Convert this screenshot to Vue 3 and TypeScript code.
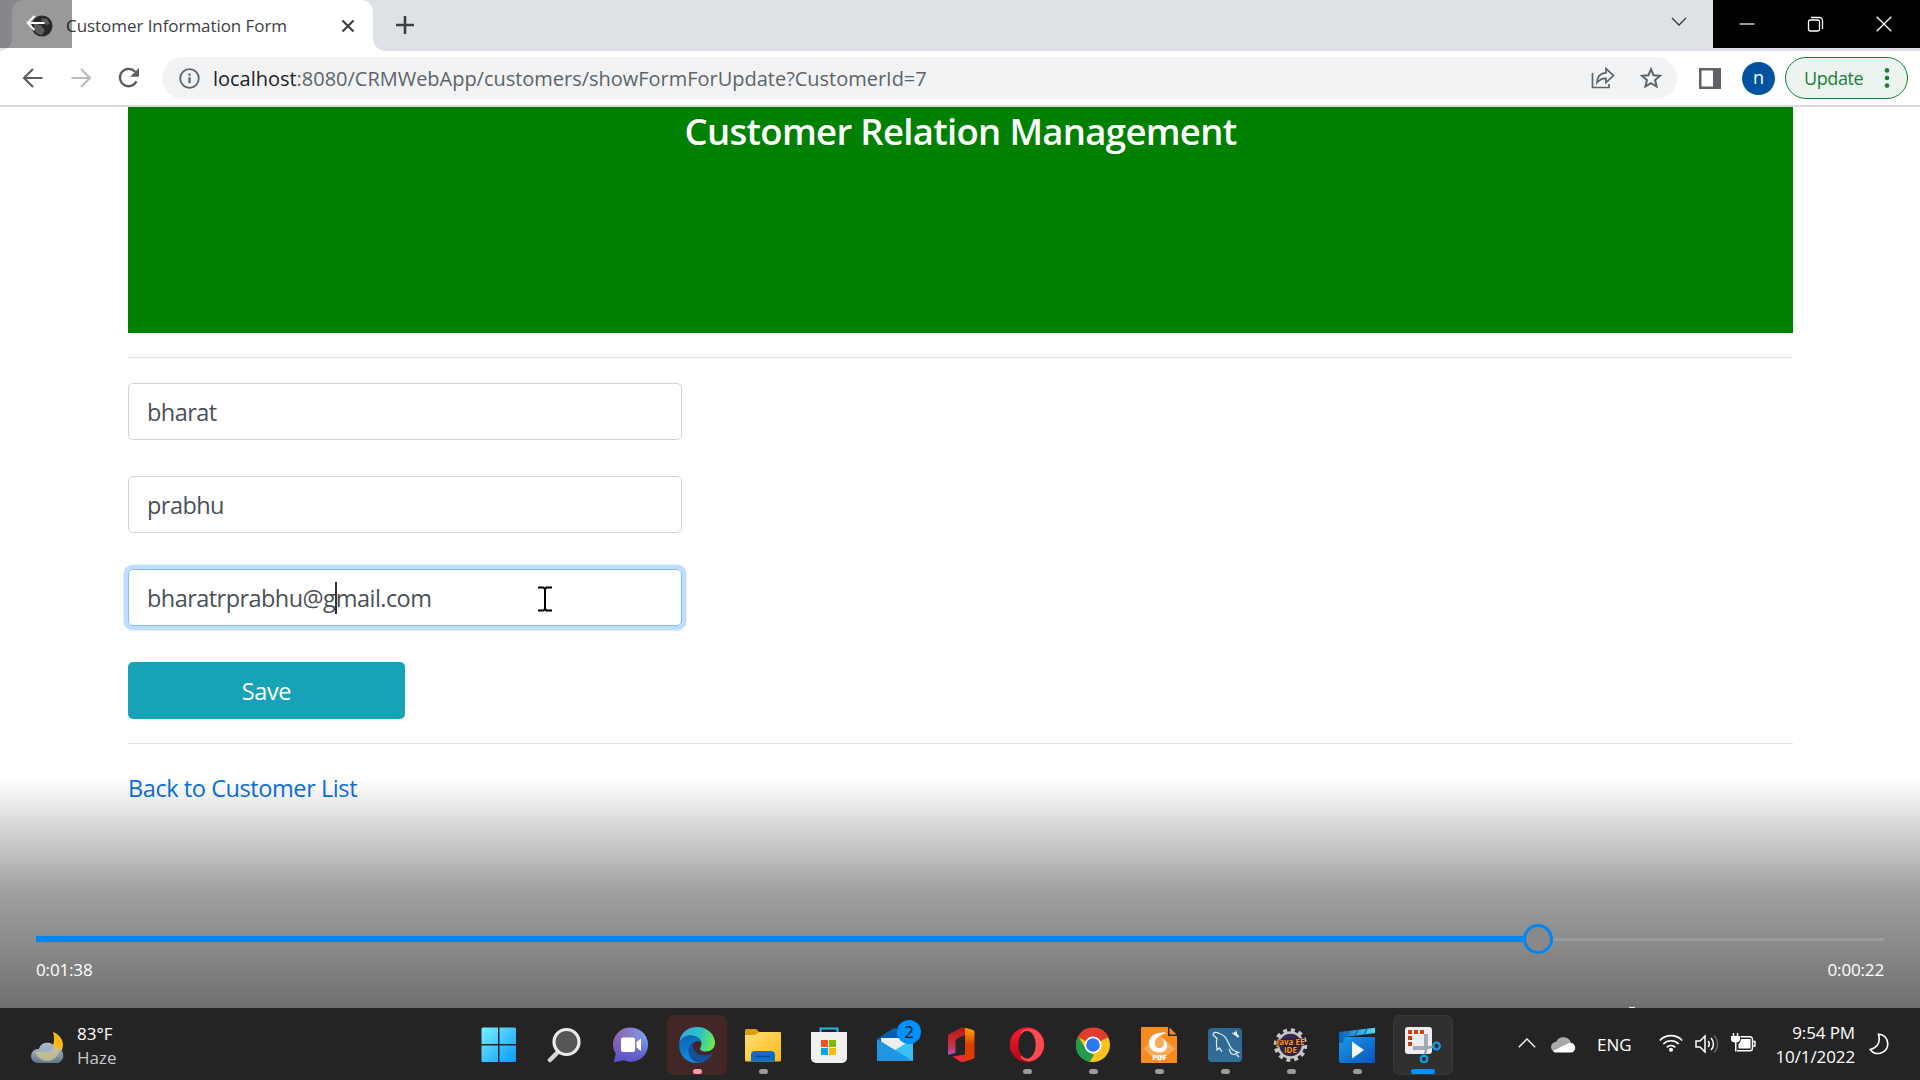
<script setup lang="ts">
import { ref } from 'vue'

const first = ref('bharat')
const last = ref('prabhu')
const progress = 81.3
</script>

<template>
  <div class="screen">
    <header class="tabs">
      <div class="tab">
        <svg class="globe" width="22" height="22" viewBox="0 0 22 22"><circle cx="11" cy="11" r="10.5" fill="#414347"/><path d="M3 8c3 0 4 2 6 2s2 3 4 4-1 4-2 6C6 20 2 16 3 8zM11 3l5 1 3 5-4 1-2-3-3-1z" fill="#999"/></svg>
        <span class="tab-title">Customer Information Form</span>
        <svg class="tab-close" width="14" height="14" viewBox="0 0 14 14"><path d="M1.5 1.5l11 11m0-11l-11 11" stroke="#3c4043" stroke-width="2.2"/></svg>
        <i class="curve left"></i><i class="curve"></i>
      </div>
      <svg class="plus" width="18" height="18" viewBox="0 0 18 18"><path d="M9 0v18M0 9h18" stroke="#3c4043" stroke-width="2.6"/></svg>
      <svg class="chev" width="16" height="10" viewBox="0 0 16 10"><path d="M1 1l7 7 7-7" fill="none" stroke="#33363a" stroke-width="1.3"/></svg>
      <div class="back-box"><svg width="20" height="16" viewBox="0 0 20 16"><path d="M8.500 1L1.500 8l7 7M2 8h16.500" fill="none" stroke="#fff" stroke-width="1.8"/></svg></div>
      <div class="caption">
        <span><svg width="16" height="16" viewBox="0 0 16 16"><path d="M.5 8h15" stroke="#fff" stroke-width="1.2"/></svg></span>
        <span><svg width="17" height="17" viewBox="0 0 17 17" fill="none" stroke="#fff" stroke-width="1.3"><rect x="1.500" y="4" width="11" height="11" rx="1.800"/><path d="M4 1.500h8.500a3 3 0 0 1 3 3V13"/></svg></span>
        <span><svg width="16" height="16" viewBox="0 0 16 16"><path d="M.7.7l14.600 14.600m0-14.600L.7 15.300" stroke="#fff" stroke-width="1.3"/></svg></span>
      </div>
    </header>

    <nav class="toolbar">
      <svg class="nav-i" width="22" height="20" viewBox="0 0 22 20"><path d="M11 1L2 10l9 9M2 10h18.500" fill="none" stroke="#5a5d62" stroke-width="2.200"/></svg>
      <svg class="nav-i" width="22" height="20" viewBox="0 0 22 20"><path d="M11 1l9 9-9 9M20 10H1.500" fill="none" stroke="#babcbe" stroke-width="2.200"/></svg>
      <svg class="nav-i reload" width="22" height="22" viewBox="0 0 22 22"><path d="M18.500 14.300A8.700 8.700 0 1 1 17.200 4.800" fill="none" stroke="#5a5d62" stroke-width="2.300"/><path d="M21 1v8.800h-8.800z" fill="#5a5d62"/></svg>
      <div class="url">
        <svg width="21" height="21" viewBox="0 0 21 21"><circle cx="10.500" cy="10.500" r="9.300" fill="none" stroke="#5f6368" stroke-width="1.800"/><path d="M10.500 9.300v6M10.500 5.500v2.200" stroke="#5f6368" stroke-width="2.200"/></svg>
        <span class="address"><b>localhost</b>:8080/CRMWebApp/customers/showFormForUpdate?CustomerId=7</span>
        <svg class="share" width="24" height="22" viewBox="0 0 24 22" fill="none" stroke="#5f6368" stroke-width="1.700"><path d="M1.500 6v14.500H18V17M6 15.500c.3-6.500 3.500-9.500 9-9.700V1.600l7.500 7-7.500 7v-4.300c-4 0-6.500 1.300-9 4.200z"/></svg>
        <svg class="star" width="22" height="22" viewBox="0 0 22 22"><path d="M11 2.200l2.500 6 6.600.6-5 4.300 1.500 6.400-5.600-3.400-5.600 3.400 1.500-6.400-5-4.300 6.600-.6z" fill="none" stroke="#5f6368" stroke-width="2"/></svg>
      </div>
      <svg class="panel" width="22" height="21" viewBox="0 0 22 21"><path d="M0 0h22v21H0zM2.500 2.500v16H14v-16z" fill="#5f6368" fill-rule="evenodd"/></svg>
      <div class="avatar">n</div>
      <div class="update"><span>Update</span><svg width="6" height="20" viewBox="0 0 6 20" fill="#188038"><circle cx="3" cy="2.400" r="2.300"/><circle cx="3" cy="10" r="2.300"/><circle cx="3" cy="17.600" r="2.300"/></svg></div>
    </nav>

    <main class="page">
      <div class="banner"><h2>Customer Relation Management</h2></div>
      <hr class="rule">
      <form @submit.prevent>
        <div class="field"><span class="value">{{ first }}</span></div>
        <div class="field"><span class="value">{{ last }}</span></div>
        <div class="field focused">
          <span class="value">bharatrprabhu@g<i class="caret"></i>mail.com</span>
          <svg class="ibeam" width="16" height="26" viewBox="0 0 16 26"><path d="M1 1.500h5.500L8 3l1.500-1.500H15M8 2v22M1 24.500h5.500L8 23l1.500 1.500H15" fill="none" stroke="#000" stroke-width="2"/></svg>
        </div>
        <button class="save">Save</button>
      </form>
      <hr class="rule">
      <a class="back">Back to Customer List</a>
    </main>

    <section class="player">
      <div class="track"><div class="fill" :style="{ width: progress + '%' }"><i class="thumb"></i></div></div>
      <div class="times"><span>0:01:38</span><span>0:00:22</span></div>
      <i class="speck"></i>
    </section>

    <footer class="taskbar">
      <div class="weather">
        <svg width="36" height="34" viewBox="0 0 36 34">
          <defs><linearGradient id="cl" x1="0" y1="0" x2="0" y2="1"><stop stop-color="#b9c9dc"/><stop offset="1" stop-color="#60758b"/></linearGradient></defs>
          <path d="M23 1c8 3 12 10 9 18-4 9-16 13-24 5 11 0 19-9 15-23z" fill="#fdb913"/>
          <path d="M8 32a7 7 0 0 1 0-14h1a8.500 8.500 0 0 1 16-1 7.700 7.700 0 0 1 3 15z" fill="url(#cl)"/>
          <path d="M5 21c7 0 13-1 17-5 3 0 5 1 8 2-3 15-20 16-25 3z" fill="#d3c98f" opacity=".75"/>
          <path d="M9 18a8.500 8.500 0 0 1 15-1c-3 5-9 5-15 4z" fill="#9eafc4" opacity=".8"/>
        </svg>
        <div><p>83°F</p><p class="haze">Haze</p></div>
      </div>

      <div class="apps">
        <div class="app"><svg width="36" height="36" viewBox="0 0 36 36"><defs><linearGradient id="win" gradientUnits="userSpaceOnUse" x1="0" y1="0" x2="36" y2="36"><stop stop-color="#79f2ff"/><stop offset="1" stop-color="#0795ff"/></linearGradient></defs><path d="M2 .5h15v16.500H.5V2A1.500 1.500 0 0 1 2 .5zM18.500.5h15A1.500 1.500 0 0 1 35 2v15H18.500zM.5 18.500H17V35H2a1.500 1.500 0 0 1-1.500-1.500zM18.500 18.500H35v15a1.500 1.500 0 0 1-1.500 1.500h-15z" fill="url(#win)"/></svg></div>
        <div class="app"><svg width="36" height="36" viewBox="0 0 36 36"><path d="M11 25L3 33" stroke="#d4d7da" stroke-width="4.500" stroke-linecap="round"/><circle cx="19.500" cy="15" r="12.500" fill="#555657" stroke="#e9eaec" stroke-width="3.200"/></svg></div>
        <div class="app"><svg width="36" height="36" viewBox="0 0 36 36"><defs><linearGradient id="chat" x1="0" y1=".3" x2="1" y2=".2"><stop stop-color="#8f5fa9"/><stop offset="1" stop-color="#7ba0ee"/></linearGradient><linearGradient id="chat2" x1="0" y1="0" x2="0" y2="1"><stop offset=".3" stop-color="#5558ce" stop-opacity="0"/><stop offset="1" stop-color="#5353cb"/></linearGradient></defs><path d="M18 .5a17 17 0 1 1-7 32.500L1 35l2-8A17 17 0 0 1 18 .5z" fill="url(#chat)"/><path d="M18 .5a17 17 0 1 1-7 32.500L1 35l2-8A17 17 0 0 1 18 .5z" fill="url(#chat2)"/><rect x="8" y="10.500" width="14" height="14.500" rx="2" fill="#fff"/><path d="M23.500 15l4.500-3.500V24l-4.500-3.500z" fill="#fff"/></svg></div>
        <div class="app hot"><svg width="36" height="36" viewBox="0 0 36 36"><defs><linearGradient id="e1" x1="0" y1=".3" x2="1" y2=".5"><stop stop-color="#35a9e8"/><stop offset=".55" stop-color="#2cc2c4"/><stop offset="1" stop-color="#6bec4b"/></linearGradient><linearGradient id="e2" x1="0" y1="0" x2=".3" y2="1"><stop stop-color="#0a62ad"/><stop offset="1" stop-color="#108de8"/></linearGradient></defs><path d="M.3 16C1 6 8.500 0 18 0c11 0 18 8 18 15.500 0 6-4.500 9-9.500 9-4 0-5.500-1.600-5.500-3 0-1.300 1.500-2 1.500-5 0-4-4.500-8-10.500-8S2 12 .3 16z" fill="url(#e1)"/><path d="M.1 17C2 11 6 8.500 11 8.500c6 0 10.500 3 11.300 7-4-3.500-10-.5-10 6C12.300 29 18 34 25 34.500c-2 1-4.500 1.500-7 1.500C7 36-.5 27.500.1 17z" fill="url(#e2)"/><path d="M14 15c-3 2-4.500 5-4.500 8.500 0 6.500 5 12 11 12.300 6-.5 10-4 12.500-8 .4-1-.5-1.300-1.300-.8C24 30.500 12 27 14 15z" fill="#144f98"/></svg><i></i></div>
        <div class="app"><svg width="36" height="36" viewBox="0 0 36 36"><defs><linearGradient id="fo" x1="0" y1="0" x2="1" y2="1"><stop stop-color="#ffe07a"/><stop offset="1" stop-color="#fbb914"/></linearGradient></defs><path d="M0 3.500A1.500 1.500 0 0 1 1.500 2H11l4 3.500V10H0z" fill="#e09c0b"/><path d="M0 8h10l4.500-3H35a1 1 0 0 1 1 1v27a1.500 1.500 0 0 1-1.500 1.500h-33A1.500 1.500 0 0 1 0 33z" fill="url(#fo)"/><path d="M6 34.500V28a4 4 0 0 1 4-4h16a4 4 0 0 1 4 4v6.500z" fill="#0b6fc9"/><path d="M11 29.500h14" stroke="#064b92" stroke-width="1.500"/></svg><i></i></div>
        <div class="app"><svg width="36" height="36" viewBox="0 0 36 36"><path d="M9.500 6V1.500h17V6" fill="none" stroke="#28b5ea" stroke-width="2"/><path d="M0 5h36v26a5 5 0 0 1-5 5H5a5 5 0 0 1-5-5z" fill="#f1f1f1"/><path d="M10 13h7v7h-7z" fill="#f25022"/><path d="M18 13h7v7h-7z" fill="#7fba00"/><path d="M10 21h7v7h-7z" fill="#00a4ef"/><path d="M18 21h7v7h-7z" fill="#ffb900"/></svg></div>
        <div class="app"><svg width="36" height="36" viewBox="0 0 36 36"><path d="M0 12L15 2q3-2 6 0l15 10-18 16z" fill="#075cac"/><path d="M4 11h28v5L18 26 4 16z" fill="#eee"/><path d="M36 12v22H0z" fill="#38c0f4"/><path d="M0 12l36 22H0z" fill="#2096e2"/></svg><b class="badge">2</b></div>
        <div class="app"><svg width="36" height="36" viewBox="0 0 36 36"><defs><linearGradient id="of" x1="0" y1="0" x2="0" y2="1"><stop stop-color="#bc1717"/><stop offset=".6" stop-color="#c5303d"/><stop offset="1" stop-color="#aa55c0"/></linearGradient><linearGradient id="of2" x1="0" y1="0" x2="0" y2="1"><stop stop-color="#ffa600"/><stop offset=".5" stop-color="#dd3d00"/></linearGradient></defs><path d="M5 9q0-1.500 1.500-2.300L18.500.8H22V8l-7 3q-2.500 1-2.500 3.500V26L5 28z" fill="url(#of)"/><path d="M22 .8l8 2.200q1.500.5 1.500 2v25q0 1.500-1.500 2L22 34.500z" fill="url(#of2)"/><path d="M9.500 29.500L22 27.500v7L19.500 35q-2 0-3.500-1z" fill="#eb263f"/></svg></div>
        <div class="app"><svg width="36" height="36" viewBox="0 0 36 36"><defs><linearGradient id="op" x1="0" y1="0" x2="0" y2="1"><stop stop-color="#ff1b2d"/><stop offset="1" stop-color="#b00717"/></linearGradient></defs><ellipse cx="18" cy="17.700" rx="17.300" ry="17.300" fill="url(#op)"/><path d="M12 5c4-4 8-4 11-3 8 2 12 9 12 16s-5 14-12 16c-4 1-8 0-11-3z" fill="#fb4a50"/><ellipse cx="18" cy="17.700" rx="8.800" ry="13.700" fill="#242424"/></svg><i></i></div>
        <div class="app"><svg width="36" height="36" viewBox="0 0 36 36"><circle cx="18" cy="18" r="17" fill="#fcc31e"/><path d="M18 18L3 10A17 17 0 0 1 33.500 10z" fill="#e33b2e"/><path d="M3.300 9.500L12 24l7 4-4.500 7A17 17 0 0 1 3.300 9.500z" fill="#229b4d"/><circle cx="18" cy="18" r="8.500" fill="#fff"/><circle cx="18" cy="18" r="6.800" fill="#2d78ec"/></svg><i></i></div>
        <div class="app"><svg width="36" height="36" viewBox="0 0 36 36"><path d="M0 0h27v9h9v27H0z" fill="#f68b1f"/><path d="M28.500.5l7 7h-7z" fill="#f68b1f"/><path d="M18 7L34 22 18 35 2 22z" fill="#faaa57"/><path d="M26 6C15 4 8 9 8 16c0 6 5 9.500 10 9.500 6 0 9-4 8-8.500-.5-2.500-2-4-4-5 2 4 1 9-3.500 9-3.500 0-5-2.500-4.500-6C14.500 11 19 7.500 26 6z" fill="#fff"/><text x="18.500" y="33" text-anchor="middle" font-size="7.500" font-weight="900" fill="#fff">PDF</text></svg><i></i></div>
        <div class="app"><svg width="36" height="36" viewBox="0 0 36 36"><defs><linearGradient id="my" x1="0" y1="0" x2="0" y2="1"><stop stop-color="#2e6693"/><stop offset="1" stop-color="#316f97"/></linearGradient></defs><rect x="1" y="1" width="34" height="34" rx="4" fill="url(#my)"/><path d="M6 8c0-3 3-3.500 6-1.500 5 1 7 4 9.500 9.500 1.500 4 3 6.500 6 8l4 1.500-3 1 3.500 3.500M6 8l4 3.500c-1.500 4 0 8 0 11.500l2.500-2L15 25M22 22l2 4.500 4 1.500" fill="none" stroke="#e4eff7" stroke-width="1.200"/><path d="M27 5.500l4.500 4.500" stroke="#fff" stroke-width="2.200"/><path d="M25 5l2 2 2-2-1-2a3 3 0 0 1 1.500 4.500A3 3 0 0 1 25 5z" fill="#fff"/></svg><i></i></div>
        <div class="app"><svg width="36" height="36" viewBox="0 0 36 36"><circle cx="17.500" cy="18" r="15" fill="#211a37" stroke="#c6c6c6" stroke-width="3.500" stroke-dasharray="4 3.850"/><circle cx="17.500" cy="18" r="12.500" fill="#30264f" stroke="#c6c6c6" stroke-width="2.500"/><text x="17.500" y="17.500" text-anchor="middle" font-size="8" font-weight="700" fill="#ff982e" stroke="#241000" stroke-width="1.200" paint-order="stroke">Java EE</text><text x="17.500" y="25.500" text-anchor="middle" font-size="8" font-weight="700" fill="#ff982e" stroke="#241000" stroke-width="1.200" paint-order="stroke">IDE</text></svg><i></i></div>
        <div class="app"><svg width="36" height="36" viewBox="0 0 36 36"><defs><linearGradient id="mv" x1="0" y1="0" x2="1" y2="1"><stop stop-color="#1e9ae6"/><stop offset="1" stop-color="#0753be"/></linearGradient><linearGradient id="mt" x1="0" y1="0" x2="1" y2="0"><stop stop-color="#0a63bd"/><stop offset="1" stop-color="#4fe0fc"/></linearGradient></defs><path d="M0 10h36v24a2 2 0 0 1-2 2H2a2 2 0 0 1-2-2z" fill="url(#mv)"/><path d="M0 5L36 .8V6L6 10l-2 6H0z" fill="url(#mt)"/><path d="M10 4L6 10M19 3l-3 5.500M28 2l-3 5.500" stroke="#0765b9" stroke-width="1.300"/><path d="M13 14.500l12 8.500-12 8.500z" fill="#f7f7f7"/></svg><i></i></div>
        <div class="app active"><svg width="36" height="36" viewBox="0 0 36 36"><rect width="27" height="27" rx="3" fill="#eceef2"/><path d="M3 5h16M5 9v10" fill="none" stroke="#d83b0b" stroke-width="4" stroke-dasharray="4 2"/><path d="M21 7v14M8 21h13" fill="none" stroke="#a6abb1" stroke-width="4"/><path d="M20 27l1.500-6 7-1.500" fill="none" stroke="#9aa3ad" stroke-width="2.500"/><circle cx="31.500" cy="19" r="3.300" fill="none" stroke="#1c97e5" stroke-width="2.300"/><circle cx="19" cy="32" r="3.300" fill="none" stroke="#1c97e5" stroke-width="2.300"/></svg><i></i></div>
      </div>

      <div class="tray">
        <svg class="up" width="18" height="10" viewBox="0 0 18 10"><path d="M.8 9.200L9 1l8.200 8.200" fill="none" stroke="#fff" stroke-width="1.300"/></svg>
        <svg class="cloud" width="25" height="17" viewBox="0 0 25 17"><path d="M5 16A5 5 0 0 1 5 6a8 8 0 0 1 15 1 4.600 4.600 0 0 1 0 9z" fill="#aaa"/><path d="M2 15L18 7a5 5 0 0 1 5 8q-1 1.500-3 1.500H5q-2 0-3-1.500z" fill="#fff"/></svg>
        <span class="lang">ENG</span>
        <svg class="wifi" width="24" height="18" viewBox="0 0 24 18" fill="none" stroke="#fff" stroke-width="1.700"><path d="M.8 6.500a15.500 15.500 0 0 1 22.400 0M4.300 10a10.800 10.800 0 0 1 15.400 0M7.700 13.300a6 6 0 0 1 8.600 0"/><circle cx="12" cy="15.700" r="1.200" fill="#fff"/></svg>
        <svg class="vol" width="24" height="20" viewBox="0 0 24 20" fill="none" stroke="#fff" stroke-width="1.500"><path d="M1 7h4l5-5v16l-5-5H1z"/><path d="M13 7a4.500 4.500 0 0 1 0 6M16 4a8.500 8.500 0 0 1 0 12"/><path d="M19 1.500a12 12 0 0 1 0 17" stroke="#666"/></svg>
        <svg class="bat" width="25" height="20" viewBox="0 0 25 20"><path d="M2.500 0v4M6.500 0v4" stroke="#fff" stroke-width="1.500"/><path d="M0 3h9v4Q8 9.500 4.500 9.500T0 7zM4 9h1.500v9.500H4z" fill="#fff"/><path d="M9.500 3.800H19a2.500 2.500 0 0 1 2.500 2.500v9A2.500 2.500 0 0 1 19 17.800H6M22 8.500h2v4.500h-2" fill="none" stroke="#fff" stroke-width="1.400"/><path d="M10 6h9.500v9.500h-12V11Q10 9 10 6z" fill="#fff"/></svg>
        <div class="clock"><p>9:54 PM</p><p>10/1/2022</p></div>
        <svg class="moon" width="20" height="22" viewBox="0 0 20 22"><path d="M9.500 1.200C15 1 18.800 5.500 18.800 11c0 9-12.500 13-17.500 5.500C7.500 15 12 10 9.500 1.200z" fill="none" stroke="#fff" stroke-width="1.600"/></svg>
      </div>
    </footer>
  </div>
</template>

<style>
body { margin: 0; overflow: hidden; }
</style>

<style scoped>
* { box-sizing: border-box; }
p { margin: 0; }
svg { display: block; flex: none; }
.screen { width: 1920px; height: 1080px; display: flex; flex-direction: column; background: #fff; position: relative; font-family: "Open Sans", "Noto Sans", sans-serif; overflow: hidden; }
.tabs { height: 51px; background: #dee1e6; display: flex; align-items: flex-start; position: relative; flex: none; }
.tab { width: 361px; height: 51px; margin-left: 12px; background: #fff; border-radius: 12px 12px 0 0; display: flex; align-items: center; position: relative; }
.globe { margin-left: 19px; }
.tab-title { margin-left: 13px; width: 222px; white-space: nowrap; font-size: 17px; color: #3c4043; letter-spacing: -0.06px; }
.tab-close { margin-left: 53px; }
.curve { position: absolute; bottom: 0; right: -12px; width: 12px; height: 12px; background: radial-gradient(circle at 100% 0, transparent 11.5px, #fff 12px); }
.curve.left { right: auto; left: -12px; background: radial-gradient(circle at 0 0, transparent 11.5px, #fff 12px); }
.plus { margin: 16px 0 0 23px; }
.chev { margin: 17px 0 0 auto; position: relative; right: 233px; }
.back-box { position: absolute; left: 0; top: 0; width: 72px; height: 48px; background: rgba(0, 0, 0, .4); padding: 15px 0 0 26px; }
.caption { position: absolute; right: 0; top: 0; width: 207px; height: 48px; background: #000; display: flex; padding-right: 1.500px; }
.caption span { flex: 1; display: flex; align-items: center; justify-content: center; }

.toolbar { height: 56px; flex: none; display: flex; align-items: center; padding: 0 12px 0 22px; border-bottom: 2px solid #d8dadc; }
.nav-i { margin-right: 26px; }
.reload { margin-right: 22px; }
.url { width: 1515px; height: 42px; border-radius: 21px; background: #f1f3f4; display: flex; align-items: center; padding: 0 15px 0 17px; }
.address { margin-left: 13px; font-size: 20px; color: #5f6368; white-space: nowrap; letter-spacing: -0.02px; }
.address b { color: #202124; font-weight: 400; }
.share { margin-left: auto; }
.star { margin-left: 25px; }
.panel { margin-left: 22px; }
.avatar { margin-left: 21px; width: 33px; height: 33px; border-radius: 50%; background: #00549f; color: #fff; font-size: 18px; line-height: 31px; text-align: center; }
.update { margin-left: auto; width: 123px; height: 42px; border: 1.500px solid #188038; border-radius: 21px; background: #ecf4ef; display: flex; align-items: center; justify-content: space-between; padding: 0 17px 0 18px; color: #188038; font-size: 18px; letter-spacing: -0.4px; }

.page { flex: none; height: 901px; padding: 0 127px 0 128px; }
.banner { height: 226px; background: #008000; text-align: center; }
h2 { margin: 0; padding-top: 1px; color: #fff; font-size: 36.500px; line-height: 46px; font-weight: 600; letter-spacing: -0.680px; }
.rule { height: 1px; border: 0; background: #dfe0e1; margin: 24.300px 0; }
form { display: block; }
.field { width: 554px; height: 57px; border: 1px solid #ced4da; border-radius: 5px; margin-bottom: 36.200px; padding-left: 18px; display: flex; align-items: center; position: relative; color: #495057; font-size: 23.500px; }
.field.focused { border-color: #80bdff; box-shadow: 0 0 0 4.500px #bfdeff; }
.value { white-space: nowrap; letter-spacing: -0.550px; position: relative; top: 1px; }
.caret { display: inline-block; width: 1.500px; height: 32px; background: #333; margin: 0 -1px 0 0; vertical-align: -7px; }
.ibeam { position: absolute; left: 408px; top: 16px; }
.save { display: block; width: 277px; height: 57px; border: 0; border-radius: 5px; background: #17a2b8; color: #fff; font: 23.500px "Open Sans", sans-serif; letter-spacing: -0.400px; }
.back { color: #0a70e4; font-size: 23.500px; line-height: 36px; display: inline-block; margin-top: 1px; letter-spacing: -0.420px; }

.player { position: absolute; left: 0; right: 0; top: 778px; height: 230px; padding: 158px 36px 0; background: linear-gradient(rgba(0,0,0,0), rgba(0,0,0,.375) 50%, rgba(0,0,0,.56)); }
.track { height: 6px; background: linear-gradient(transparent 2px, #9b9b9b 2px, #9b9b9b 5px, transparent 5px); }
.fill { height: 6px; background: linear-gradient(90deg, #0086f0 calc(100% - 15px), transparent 0); position: relative; }
.thumb { position: absolute; right: -15px; top: -12px; width: 30px; height: 30px; border: 3px solid #0086f0; border-radius: 50%; background: #898989; }
.times { display: flex; justify-content: space-between; color: #fff; font-size: 17px; line-height: 24px; margin-top: 16px; letter-spacing: -0.150px; }
.speck { position: absolute; left: 1629px; bottom: 0; width: 6px; height: 1px; background: #eee; }

.taskbar { position: absolute; left: 0; right: 0; top: 1008px; height: 72px; background: #242424; display: flex; color: #fff; font-size: 17px; line-height: 24px; }
.weather { width: 474px; padding: 14px 0 0 30px; display: flex; gap: 11px; }
.weather svg { margin-top: 9px; }
.weather .haze { color: #c8c8c8; }
.apps { display: flex; gap: 6px; padding-top: 7px; margin-left: -5px; }
.app { width: 60px; height: 60px; border-radius: 7px; padding: 12px; position: relative; }
.app > i { position: absolute; left: 25.500px; bottom: 1px; width: 9px; height: 5px; border-radius: 3px; background: #9b9b9b; }
.hot { background: #432626; }
.hot > i { background: #ff99a4; }
.active { background: #303030; box-shadow: inset 0 0 0 1px #3a3a3a; }
.active > i { left: 18px; width: 24px; background: #0090ff; }
.badge { position: absolute; left: 32px; top: 5px; width: 24px; height: 24px; border-radius: 50%; background: #0090ff; color: #111; text-align: center; font-weight: 400; font-size: 17px; }
.tray { margin-left: auto; display: flex; align-items: flex-start; padding-right: 31px; }
.up { margin-top: 30px; }
.cloud { margin: 28px 0 0 15px; }
.lang { margin: 25px 0 0 21px; width: 36px; }
.wifi { margin: 26px 0 0 26px; }
.vol { margin: 26px 0 0 12px; }
.bat { margin: 25px 0 0 12px; }
.clock { margin: 13px 0 0 20px; width: 79px; letter-spacing: -0.100px; white-space: nowrap; }
.clock p { display: flex; justify-content: flex-end; }
.moon { margin: 25px 0 0 14px; }
</style>
